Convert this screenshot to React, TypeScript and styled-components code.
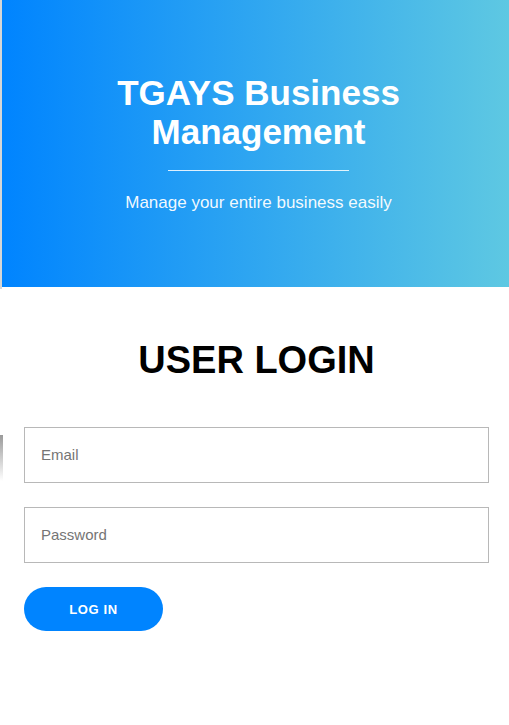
import React from "react";
import styled, { createGlobalStyle } from "styled-components";

const GlobalStyle = createGlobalStyle`
  html, body {
    margin: 0;
    padding: 0;
    background: #ffffff;
    font-family: "Liberation Sans", Arial, sans-serif;
  }
  * { box-sizing: border-box; }
`;

const Page = styled.div`
  position: relative;
  width: 509px;
  min-height: 725px;
  background: #ffffff;
`;

const HeroWrap = styled.div`
  border-left: 2px solid #d6d6d6;
  padding-bottom: 2px;
`;

const Hero = styled.header`
  height: 287px;
  display: flex;
  flex-direction: column;
  align-items: center;
  justify-content: flex-start;
  padding: 73px 0 0 6px;
  background: linear-gradient(to right, #0084ff 0%, #5ec8e2 100%);
  color: #ffffff;
  text-align: center;
`;

const HeroTitle = styled.h1`
  margin: 0;
  font-size: 35px;
  font-weight: 700;
  line-height: 39px;
  width: 320px;
`;

const Divider = styled.hr`
  width: 181px;
  height: 1px;
  border: 0;
  margin: 19px 0 22px;
  background: rgba(255, 255, 255, 0.85);
`;

const HeroSub = styled.p`
  margin: 0;
  font-size: 17px;
  line-height: 20px;
  color: rgba(255, 255, 255, 0.95);
`;

const Shade = styled.div`
  position: absolute;
  left: 0;
  top: 435px;
  width: 3px;
  height: 46px;
  background: linear-gradient(to bottom, #9a9a9a, #ffffff);
`;

const LoginSection = styled.section`
  padding: 49px 20px 0 24px;
`;

const LoginTitle = styled.h2`
  margin: 0 0 45px;
  text-align: center;
  font-size: 38px;
  font-weight: 700;
  line-height: 44px;
  color: #000000;
`;

const Form = styled.form`
  display: flex;
  flex-direction: column;
  align-items: flex-start;
  gap: 24px;
`;

const Field = styled.input`
  width: 465px;
  height: 56px;
  padding: 0 16px 2px;
  border: 1px solid #b8b8b8;
  border-radius: 0;
  font-family: "Liberation Sans", Arial, sans-serif;
  font-size: 15px;
  color: #333;
  outline: none;
  &::placeholder {
    color: #757575;
  }
`;

const Button = styled.button`
  width: 139px;
  height: 44px;
  border: 0;
  border-radius: 22px;
  background: #0084ff;
  color: #ffffff;
  font-family: "Liberation Sans", Arial, sans-serif;
  font-size: 13px;
  font-weight: 700;
  letter-spacing: 0.6px;
  cursor: pointer;
`;

export default function App() {
  return (
    <Page>
      <GlobalStyle />
      <HeroWrap>
        <Hero>
          <HeroTitle>TGAYS Business Management</HeroTitle>
          <Divider />
          <HeroSub>Manage your entire business easily</HeroSub>
        </Hero>
      </HeroWrap>
      <Shade />
      <LoginSection>
        <LoginTitle>USER LOGIN</LoginTitle>
        <Form onSubmit={(e) => e.preventDefault()}>
          <Field type="email" placeholder="Email" />
          <Field type="password" placeholder="Password" />
          <Button type="submit">LOG IN</Button>
        </Form>
      </LoginSection>
    </Page>
  );
}
